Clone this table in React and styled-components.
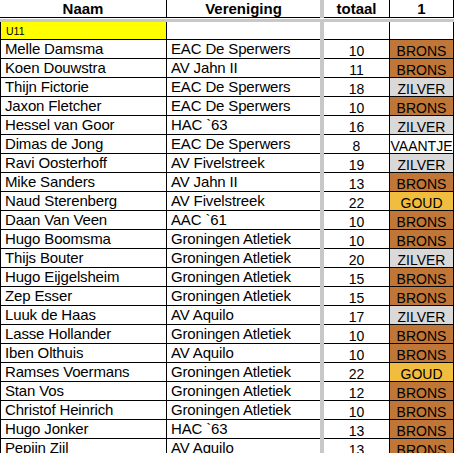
import React from "react";
import styled, { createGlobalStyle, css } from "styled-components";

const Global = createGlobalStyle`
  html, body { margin: 0; padding: 0; background: #ffffff; overflow: hidden; }
  body { font-family: "Liberation Sans", Arial, sans-serif; color: #000; }
`;

const MEDAL = {
  BRONS: "#BF7637",
  ZILVER: "#D9D9D9",
  GOUD: "#F1BD3E",
  VAANTJE: "#FFFFFF",
};

const rows = [
  ["Melle Damsma", "EAC De Sperwers", 10, "BRONS"],
  ["Koen Douwstra", "AV Jahn II", 11, "BRONS"],
  ["Thijn Fictorie", "EAC De Sperwers", 18, "ZILVER"],
  ["Jaxon Fletcher", "EAC De Sperwers", 10, "BRONS"],
  ["Hessel van Goor", "HAC `63", 16, "ZILVER"],
  ["Dimas de Jong", "EAC De Sperwers", 8, "VAANTJE"],
  ["Ravi Oosterhoff", "AV Fivelstreek", 19, "ZILVER"],
  ["Mike Sanders", "AV Jahn II", 13, "BRONS"],
  ["Naud Sterenberg", "AV Fivelstreek", 22, "GOUD"],
  ["Daan Van Veen", "AAC `61", 10, "BRONS"],
  ["Hugo Boomsma", "Groningen Atletiek", 10, "BRONS"],
  ["Thijs Bouter", "Groningen Atletiek", 20, "ZILVER"],
  ["Hugo Eijgelsheim", "Groningen Atletiek", 15, "BRONS"],
  ["Zep Esser", "Groningen Atletiek", 15, "BRONS"],
  ["Luuk de Haas", "AV Aquilo", 17, "ZILVER"],
  ["Lasse Hollander", "Groningen Atletiek", 10, "BRONS"],
  ["Iben Olthuis", "AV Aquilo", 10, "BRONS"],
  ["Ramses Voermans", "Groningen Atletiek", 22, "GOUD"],
  ["Stan Vos", "Groningen Atletiek", 12, "BRONS"],
  ["Christof Heinrich", "Groningen Atletiek", 10, "BRONS"],
  ["Hugo Jonker", "HAC `63", 13, "BRONS"],
  ["Pepijn Zijl", "AV Aquilo", 13, "BRONS"],
];

const Sheet = styled.div`
  display: flex;
  flex-direction: column;
  width: 454px;
`;

const Row = styled.div`
  display: grid;
  grid-template-columns: 167px 153px 4px 66px 64px;
  height: ${(p) => p.$h}px;
`;

const Cell = styled.div`
  box-sizing: border-box;
  border-bottom: 1px solid #000;
  white-space: nowrap;
  overflow: hidden;
  display: flex;
  background: ${(p) => p.$bg || "#fff"};
  ${(p) => p.$first && css`border-left: 1px solid #000;`}
  ${(p) => p.$right && css`border-right: 1px solid #000;`}
`;

const Gap = styled.div`
  background: #c8c8c8;
`;

const HeadCell = styled(Cell)`
  justify-content: center;
  align-items: flex-start;
  font-weight: bold;
  font-size: 15px;
  line-height: 17px;
`;

const TextCell = styled(Cell)`
  font-size: 15px;
  line-height: 18px;
  padding-left: 4px;
  align-items: flex-start;
  letter-spacing: -0.15px;
`;

const CenterCell = styled(Cell)`
  justify-content: center;
  align-items: flex-start;
  font-size: 14px;
  line-height: 18px;
  padding-top: 2px;
`;

const GroupCell = styled(Cell)`
  font-size: 10.5px;
  line-height: 17px;
  padding-left: 5px;
  padding-top: 1px;
  align-items: flex-start;
`;

const Band = styled.div`
  height: 4px;
  box-sizing: border-box;
  border-top: 1px solid #fff;
  background: #c8c8c8;
`;

export default function App() {
  return (
    <>
      <Global />
      <Sheet>
        <Row $h={18}>
          <HeadCell $right>Naam</HeadCell>
          <HeadCell>Vereniging</HeadCell>
          <Gap />
          <HeadCell $right>totaal</HeadCell>
          <HeadCell $right>1</HeadCell>
        </Row>
        <Band />
        <Row $h={18}>
          <GroupCell $first $right $bg="#ffff00">U11</GroupCell>
          <GroupCell />
          <Gap />
          <GroupCell $right />
          <GroupCell $right />
        </Row>
        {rows.map(([naam, ver, tot, medal]) => (
          <Row key={naam} $h={19}>
            <TextCell $first $right>{naam}</TextCell>
            <TextCell>{ver}</TextCell>
            <Gap />
            <CenterCell $right>{tot}</CenterCell>
            <CenterCell $right $bg={MEDAL[medal]}>{medal}</CenterCell>
          </Row>
        ))}
      </Sheet>
    </>
  );
}
